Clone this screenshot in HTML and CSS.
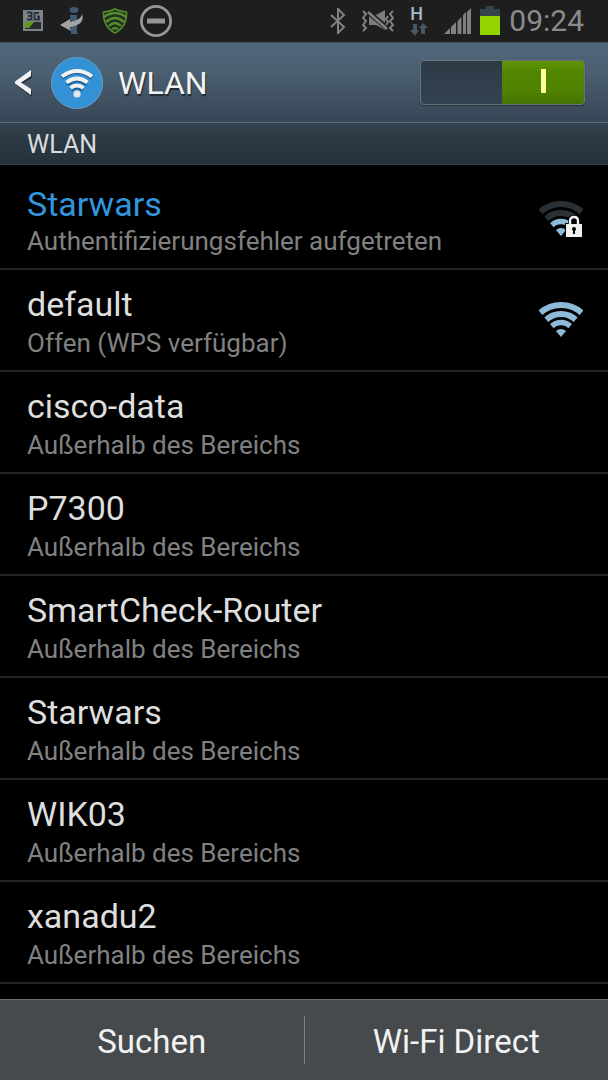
FILE: index.html
```html
<!DOCTYPE html>
<html lang="de">
<head>
<meta charset="utf-8">
<meta name="viewport" content="width=device-width, initial-scale=1">
<title>WLAN</title>
<link rel="stylesheet" href="styles.css">
</head>
<body>
<div class="statusbar">
  <div class="status-left">
    <svg width="24" height="22" viewBox="0 0 24 22" aria-hidden="true">
      <rect x="1" y="0" width="20" height="21" fill="#7e8285"/>
      <rect x="3" y="12" width="16" height="7" fill="#252b2e"/>
      <path d="M3 12h9l-5 6H3z" fill="#5f9a1d"/>
      <path d="M5 2.500h4.500v7H5M6 6h3.500M17 3h-4.500v6.500H17V6.500h-2" fill="none" stroke="#26343f" stroke-width="1.800"/>
    </svg>
    <svg width="30" height="30" viewBox="-2 0 30 30" aria-hidden="true">
      <ellipse cx="14" cy="4" rx="4.500" ry="3" fill="#3f5a72"/>
      <path d="M10 9h7v17l1 2h-7z" fill="#3f5a72"/>
      <path d="M22 8c3 8-4 12-12 13l1 4-11-6 10-6v3c6-1 11-3 12-8z" fill="#a2a4a5"/>
    </svg>
    <svg width="28" height="26" viewBox="-2 0 28 26" aria-hidden="true">
      <path d="M13 1Q7 4 1.500 4Q1 19 13 25Q25 19 24.500 4Q19 4 13 1z" fill="#23301f" stroke="#568c2b" stroke-width="1.600"/>
      <path d="M2 9q11-8 22 0M4 14q9-8 18 0M7 18q6-6 12 0M10 21.500q3-3 6 0" fill="none" stroke="#568c2b" stroke-width="2.400"/>
    </svg>
    <svg width="32" height="32" viewBox="1 1 32 32" aria-hidden="true">
      <circle cx="17" cy="17" r="14.600" fill="none" stroke="#96969a" stroke-width="2.800"/>
      <path d="M8 17h18" stroke="#96969a" stroke-width="5"/>
    </svg>
  </div>
  <div class="status-right">
    <svg width="16" height="26" viewBox="0 0 16 26" aria-hidden="true">
      <path d="M1 7l13 12-6 6V1l6 6L1 19" fill="none" stroke="#818181" stroke-width="2"/>
    </svg>
    <svg width="32" height="22" viewBox="0 0 32 22" aria-hidden="true">
      <path d="M7 5h7l9-5v20l-9-5H7z" fill="#7c7c7c"/>
      <path d="M5 1l21 18" stroke="#1d1d1d" stroke-width="5"/>
      <path d="M6 2l19 17" stroke="#818181" stroke-width="2.600"/>
      <path d="M1 1l3 3-3 4 3 3-3 4 3 3-3 3M31 1l-3 3 3 4-3 3 3 4-3 3 3 3M26 6l-2 3 2 3-2 3" fill="none" stroke="#818181" stroke-width="2"/>
    </svg>
    <div class="data">
      <span class="data-type">H</span>
      <svg width="18" height="13" viewBox="0 0 18 13" aria-hidden="true">
        <path d="M3 1h4v6h2l-4 6-5-6h3zM11 11h4V5h3l-5-5-4 5h2z" fill="#465663"/>
      </svg>
    </div>
    <svg class="signal" width="28" height="28" viewBox="0 0 28 28" aria-hidden="true">
      <path d="M0 27l6-6v6zM7 27v-7l5-5v12zM13.500 27V14l4-4v17zM19 27V8l3-3v22zM23 27V5l4-4v26z" fill="#808080"/>
    </svg>
    <svg width="20" height="30" viewBox="0 0 20 30" aria-hidden="true">
      <path d="M6 0h8v3h6v8H0V3h6z" fill="#34424c"/>
      <path d="M0 10h20v19H0z" fill="#93d300"/>
    </svg>
    <time class="clock">09:24</time>
  </div>
</div>

<header class="header">
  <button class="back" type="button" aria-label="Zurück">
    <svg width="18" height="28" viewBox="0 0 18 28" aria-hidden="true">
      <path d="M18 3v6L8 15l10 7v6L2 16v-2z" fill="#26323c"/>
      <path d="M17 1v6L7 13.500 17 20v6L1 14.500v-2z" fill="#f2f2f2"/>
    </svg>
  </button>
  <svg width="54" height="54" viewBox="0 0 54 54" aria-hidden="true">
    <circle cx="27" cy="27" r="25.500" fill="#3391d6" stroke="#6b9fc6"/>
    <g fill="none" stroke="#1f5e92" stroke-width="3.600" transform="translate(0 1.500)">
      <path d="M12 20.500q15-11 30 0M17 27q10-8 20 0M21 32.500q6-5 12 0"/>
    </g>
    <g fill="none" stroke="#f1f1f1" stroke-width="4">
      <path d="M12 20.500q15-11 30 0M16.500 26.500q10.500-8 21 0M20.500 32q6.500-5 13 0"/>
    </g>
    <circle cx="27" cy="38" r="3.600" fill="#e6e6e6"/>
  </svg>
  <h1 class="title">WLAN</h1>
  <input class="switch" type="checkbox" role="switch" aria-label="WLAN" checked>
</header>

<h2 class="section">WLAN</h2>

<main class="content">
  <ul class="list">
    <li class="item"><button class="row" type="button">
      <span class="labels"><span class="name active">Starwars</span><span class="state">Authentifizierungsfehler aufgetreten</span></span>
      <svg width="44" height="40" viewBox="0 0 44 40" aria-hidden="true">
        <defs><clipPath id="fan"><path d="M22 35L0 9V-2H44V9z"/></clipPath></defs>
        <g clip-path="url(#fan)" fill="none">
          <circle cx="22" cy="34" r="31" stroke="#293138" stroke-width="6"/>
          <circle cx="22" cy="34" r="22" stroke="#293138" stroke-width="6"/>
          <circle cx="22" cy="34" r="13.500" stroke="#8dbad6" stroke-width="5.500"/>
          <circle cx="22" cy="34" r="7" fill="#8dbad6"/>
        </g>
        <path d="M26 22h3v-3q0-5 6-5t6 5v3h3v16H26z" fill="#000"/>
        <path d="M31 24v-4q0-4 4-4t4 4v4" fill="none" stroke="#f0f0f0" stroke-width="2.400"/>
        <path d="M27 23h16v13H27z" fill="#f0f0f0"/>
        <path d="M35 29v4" stroke="#000" stroke-width="2"/><circle cx="35" cy="28" r="2" fill="#000"/>
      </svg>
    </button></li>
    <li class="item"><button class="row" type="button">
      <span class="labels"><span class="name">default</span><span class="state">Offen (WPS verfügbar)</span></span>
      <svg width="44" height="40" viewBox="0 0 44 40" aria-hidden="true">
        <g clip-path="url(#fan)" fill="none" stroke="#8dbad6">
          <circle cx="22" cy="34" r="31" stroke-width="6"/>
          <circle cx="22" cy="34" r="22" stroke-width="6"/>
          <circle cx="22" cy="34" r="13.500" stroke-width="5.500"/>
          <circle cx="22" cy="34" r="7" fill="#8dbad6" stroke="none"/>
        </g>
      </svg>
    </button></li>
    <li class="item"><button class="row" type="button"><span class="labels"><span class="name">cisco-data</span><span class="state">Außerhalb des Bereichs</span></span></button></li>
    <li class="item"><button class="row" type="button"><span class="labels"><span class="name">P7300</span><span class="state">Außerhalb des Bereichs</span></span></button></li>
    <li class="item"><button class="row" type="button"><span class="labels"><span class="name">SmartCheck-Router</span><span class="state">Außerhalb des Bereichs</span></span></button></li>
    <li class="item"><button class="row" type="button"><span class="labels"><span class="name">Starwars</span><span class="state">Außerhalb des Bereichs</span></span></button></li>
    <li class="item"><button class="row" type="button"><span class="labels"><span class="name">WIK03</span><span class="state">Außerhalb des Bereichs</span></span></button></li>
    <li class="item"><button class="row" type="button"><span class="labels"><span class="name">xanadu2</span><span class="state">Außerhalb des Bereichs</span></span></button></li>
  </ul>
</main>

<footer class="actions">
  <button class="action" type="button">Suchen</button>
  <button class="action" type="button">Wi-Fi Direct</button>
</footer>
</body>
</html>
```
FILE: styles.css
```css
* {
  box-sizing: border-box;
}

body {
  margin: 0;
  min-height: 100vh;
  display: flex;
  flex-direction: column;
  background: #000;
  color: #dedede;
  font-family: Roboto, "Noto Sans", sans-serif;
}

button {
  border: 0;
  padding: 0;
  background: none;
  color: inherit;
  font: inherit;
  cursor: pointer;
}

svg {
  display: block;
  flex: none;
}

/* Status bar */
.statusbar {
  display: flex;
  justify-content: space-between;
  align-items: center;
  height: 42px;
  padding: 0 24px 0 22px;
  background: #1e1e1e;
}

.status-left {
  display: flex;
  align-items: center;
  gap: 12px;
}

.status-right {
  display: flex;
  align-items: center;
  gap: 16px;
}

.data {
  display: flex;
  flex-direction: column;
  gap: 2px;
}

.data-type {
  color: #a5bcc8;
  font-size: 18px;
  font-weight: 500;
  line-height: 14px;
}

.signal {
  margin-right: -8px;
}

.clock {
  margin-left: -7px;
  color: #8b8b8b;
  font-size: 30px;
  line-height: 42px;
}

/* Header */
.header {
  display: flex;
  align-items: center;
  height: 81px;
  padding: 0 23px 0 14px;
  border-top: 1px solid #3c5268;
  border-bottom: 1px solid #566e82;
  background: linear-gradient(#50677c, #4b6072 35%, #374655);
}

.back {
  margin-right: 18px;
}

.title {
  flex: 1;
  margin: 0 0 0 14px;
  color: #f2f2f2;
  font-size: 32px;
  font-weight: 400;
  line-height: 40px;
  text-shadow: 1px 2px 1px #202b34;
}

.switch {
  appearance: none;
  width: 165px;
  height: 45px;
  margin: 0;
  border: 1px solid #6b7275;
  border-radius: 4px;
  background: linear-gradient(#2d3a46, #344350);
  box-shadow: 0 1px 1px #27333d;
  cursor: pointer;
}

.switch:checked {
  background:
    linear-gradient(#ffffa0, #ffffa0) 120px 8px / 5px 24px no-repeat,
    linear-gradient(#5f9406, #518400 30%, #518400 65%, #477303) right / 82px 100% no-repeat,
    linear-gradient(#2d3a46, #344350);
}

.section {
  margin: 0;
  padding: 3px 27px 0;
  background: linear-gradient(#34434f, #2b3843 40%, #26323b);
  border-bottom: 1px solid #2c3d48;
  color: #dcdcdc;
  font-size: 25px;
  font-weight: 400;
  line-height: 38px;
}

/* Network list */
.content {
  flex: 1;
}

.list {
  margin: 0;
  padding: 0;
  list-style: none;
}

.item {
  border-bottom: 2px solid #242424;
}

.row {
  display: flex;
  justify-content: space-between;
  align-items: center;
  width: 100%;
  padding: 14px 25px 11px 27px;
  text-align: left;
}

.item:first-child .row {
  padding-top: 19px;
}

.labels {
  display: flex;
  flex-direction: column;
  gap: 3px;
}

.item:first-child .labels {
  gap: 1px;
}

.name {
  font-size: 34px;
  line-height: 40px;
}

.active {
  color: #3396dc;
}

.state {
  color: #818181;
  font-size: 26px;
  line-height: 32px;
}

/* Bottom actions */
.actions {
  display: flex;
  align-items: center;
  height: 81px;
  border-top: 1px solid #6f7173;
  background: #464a4d;
}

.action {
  flex: 1;
  height: 48px;
  padding-top: 3px;
  color: #f2f2f2;
  font-size: 33px;
  line-height: 45px;
}

.action + .action {
  border-left: 1px solid #7c8083;
}
```
